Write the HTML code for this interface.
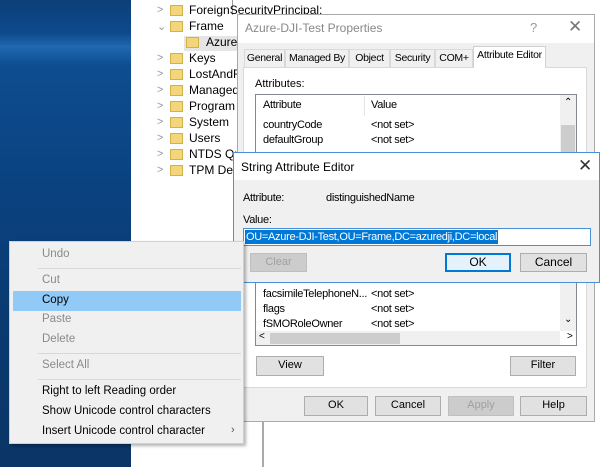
<!DOCTYPE html>
<html><head><style>
*{margin:0;padding:0;box-sizing:border-box}
body{width:614px;height:467px;overflow:hidden;position:relative;font-family:"Liberation Sans",sans-serif;font-size:11px;color:#000;background:#fff}
.a{position:absolute;white-space:nowrap}
.desk{left:0;top:0;width:131px;height:467px;background:linear-gradient(180deg,#0b3f78 0%,#0d4a8c 7%,#2068b0 10%,#0e4d90 14%,#0a4280 40%,#093a70 70%,#0a3566 100%)}
.tree div.t{position:absolute;left:189px;font-size:12px}
.chev{position:absolute;left:157px;color:#999;font-size:11px}
.fold{position:absolute;left:170px;width:13px;height:11px;background:#f3d57a;border:1px solid #d8b04a}
.dlg{background:#f0f0f0;border:1px solid #aaa}
.btn{position:absolute;background:#e1e1e1;border:1px solid #adadad;text-align:center;font-size:11px;line-height:17px}
.dis{color:#a0a0a0;background:#ccc;border-color:#bfbfbf}
.tab{position:absolute;top:49px;height:18px;border:1px solid #d9d9d9;border-bottom:none;background:#f0f0f0;font-size:10.5px;letter-spacing:-0.3px;line-height:17px;text-align:center;white-space:nowrap;overflow:hidden}
.menu div.m{position:absolute;left:41px;font-size:11.5px}
.g{color:#8a8a8a}
.sep{position:absolute;left:37px;width:203px;height:1px;background:#d7d7d7}
.ls{font-size:11px;letter-spacing:-0.3px}
</style></head><body>
<div class="a desk"></div>
<div class="a" style="left:131px;top:0;width:483px;height:467px;background:#fff"></div>
<div class="a" style="left:232px;top:0;width:1px;height:15px;background:#999"></div>
<div class="a" style="left:262px;top:421px;width:2px;height:46px;background:#aaa"></div>
<div class="tree">
<div class="a" style="left:184px;top:36px;width:53px;height:15px;background:#e5e5e5"></div>
<span class="chev" style="top:4px">&gt;</span><div class="fold" style="top:5px"></div><div class="t" style="top:3px">ForeignSecurityPrincipal:</div>
<span class="chev" style="top:20px">&#8964;</span><div class="fold" style="top:21px"></div><div class="t" style="top:19px">Frame</div>
<div class="fold" style="top:37px;left:186px"></div><div class="t" style="top:35px;left:206px">Azure-</div>
<span class="chev" style="top:52px">&gt;</span><div class="fold" style="top:53px"></div><div class="t" style="top:51px">Keys</div>
<span class="chev" style="top:68px">&gt;</span><div class="fold" style="top:69px"></div><div class="t" style="top:67px">LostAndFo</div>
<span class="chev" style="top:84px">&gt;</span><div class="fold" style="top:85px"></div><div class="t" style="top:83px">Managed</div>
<span class="chev" style="top:100px">&gt;</span><div class="fold" style="top:101px"></div><div class="t" style="top:99px">Program D</div>
<span class="chev" style="top:116px">&gt;</span><div class="fold" style="top:117px"></div><div class="t" style="top:115px">System</div>
<span class="chev" style="top:132px">&gt;</span><div class="fold" style="top:133px"></div><div class="t" style="top:131px">Users</div>
<span class="chev" style="top:148px">&gt;</span><div class="fold" style="top:149px"></div><div class="t" style="top:147px">NTDS Qu</div>
<span class="chev" style="top:164px">&gt;</span><div class="fold" style="top:165px"></div><div class="t" style="top:163px">TPM Dev</div>
</div>

<div class="a dlg" style="left:237px;top:14px;width:358px;height:408px">
<div class="a" style="left:0;top:0;width:356px;height:28px;background:#fff"></div>
<div class="a" style="left:7px;top:6px;font-size:12px;color:#888">Azure-DJI-Test Properties</div>
<div class="a" style="left:292px;top:5px;font-size:13px;color:#999">?</div>
<div class="a" style="left:330px;top:2px;font-size:17px;color:#777">&#10005;</div>
</div>
<div class="tab" style="left:244px;width:41px">General</div>
<div class="tab" style="left:285px;width:64px">Managed By</div>
<div class="tab" style="left:349px;width:41px">Object</div>
<div class="tab" style="left:390px;width:45px">Security</div>
<div class="tab" style="left:435px;width:38px">COM+</div>
<div class="tab" style="left:473px;top:46px;height:22px;width:73px;background:#fff;border-color:#d0d0d0">Attribute Editor</div>
<div class="a" style="left:243px;top:67px;width:344px;height:321px;background:#fff;border:1px solid #d9d9d9"></div>
<div class="a" style="left:474px;top:66px;width:71px;height:2px;background:#fff"></div>
<div class="a" style="left:255px;top:78px">Attributes:</div>
<div class="a" style="left:255px;top:94px;width:322px;height:252px;border:1px solid #828790;background:#fff"></div>
<div class="a ls" style="left:263px;top:99px">Attribute</div>
<div class="a" style="left:364px;top:96px;width:1px;height:20px;background:#e5e5e5"></div>
<div class="a ls" style="left:371px;top:99px">Value</div>
<div class="a ls" style="left:263px;top:119px">countryCode</div><div class="a ls" style="left:371px;top:119px">&lt;not set&gt;</div>
<div class="a ls" style="left:263px;top:134px">defaultGroup</div><div class="a ls" style="left:371px;top:134px">&lt;not set&gt;</div>
<div class="a" style="left:560px;top:95px;width:16px;height:236px;background:#f0f0f0"></div>
<div class="a" style="left:561px;top:125px;width:14px;height:30px;background:#cdcdcd"></div>
<div class="a" style="left:564px;top:97px;font-size:10px">&#8963;</div>
<div class="a" style="left:564px;top:314px;font-size:10px">&#8964;</div>
<div class="a ls" style="left:263px;top:288px">facsimileTelephoneN...</div><div class="a ls" style="left:371px;top:288px">&lt;not set&gt;</div>
<div class="a ls" style="left:263px;top:303px">flags</div><div class="a ls" style="left:371px;top:303px">&lt;not set&gt;</div>
<div class="a ls" style="left:263px;top:318px">fSMORoleOwner</div><div class="a ls" style="left:371px;top:318px">&lt;not set&gt;</div>
<div class="a" style="left:256px;top:331px;width:304px;height:14px;background:#f0f0f0"></div>
<div class="a" style="left:270px;top:333px;width:130px;height:11px;background:#cdcdcd"></div>
<div class="a" style="left:259px;top:331px;font-size:10px">&lt;</div>
<div class="a" style="left:567px;top:331px;font-size:10px">&gt;</div>
<div class="btn" style="left:256px;top:356px;width:68px;height:20px">View</div>
<div class="btn" style="left:510px;top:356px;width:66px;height:20px">Filter</div>
<div class="btn" style="left:304px;top:396px;width:64px;height:20px">OK</div>
<div class="btn" style="left:375px;top:396px;width:66px;height:20px">Cancel</div>
<div class="btn dis" style="left:448px;top:396px;width:66px;height:20px">Apply</div>
<div class="btn" style="left:520px;top:396px;width:67px;height:20px">Help</div>

<div class="a" style="left:233px;top:152px;width:367px;height:131px;background:#f0f0f0;border:1px solid #4a90d9">
<div class="a" style="left:0;top:0;width:365px;height:27px;background:#fff"></div>
<div class="a" style="left:7px;top:7px;font-size:12px">String Attribute Editor</div>
<div class="a" style="left:344px;top:3px;font-size:17px;color:#333">&#10005;</div>
<div class="a ls" style="left:9px;top:39px">Attribute:</div>
<div class="a ls" style="left:92px;top:39px">distinguishedName</div>
<div class="a ls" style="left:9px;top:61px">Value:</div>
<div class="a" style="left:9px;top:75px;width:348px;height:18px;background:#fff;border:1px solid #4a90d9"></div>
<div class="a ls" style="left:11px;top:77px;padding:0 1px;background:#0078d7;color:#fff;line-height:14px">OU=Azure-DJI-Test,OU=Frame,DC=azuredji,DC=local</div>
</div>
<div class="btn dis" style="left:250px;top:253px;width:57px;height:19px">Clear</div>
<div class="btn" style="left:445px;top:253px;width:66px;height:19px;border:2px solid #0078d7;background:#e5f1fb;font-size:12px;line-height:15px">OK</div>
<div class="btn" style="left:520px;top:253px;width:67px;height:19px;font-size:12px">Cancel</div>

<div class="a menu" style="left:9px;top:241px;width:235px;height:203px;background:#f0f0f0;border:1px solid #d0d0d0;box-shadow:2px 2px 3px rgba(0,0,0,.3)">
<div class="a" style="left:3px;top:49px;width:228px;height:20px;background:#91c9f7"></div>
<div class="m g" style="top:6px;left:32px">Undo</div>
<div class="sep" style="top:26px;left:28px"></div>
<div class="m g" style="top:32px;left:32px">Cut</div>
<div class="m" style="top:52px;left:32px">Copy</div>
<div class="m g" style="top:71px;left:32px">Paste</div>
<div class="m g" style="top:91px;left:32px">Delete</div>
<div class="sep" style="top:111px;left:28px"></div>
<div class="m g" style="top:117px;left:32px">Select All</div>
<div class="sep" style="top:137px;left:28px"></div>
<div class="m" style="top:143px;left:32px">Right to left Reading order</div>
<div class="m" style="top:163px;left:32px">Show Unicode control characters</div>
<div class="m" style="top:183px;left:32px">Insert Unicode control character</div>
<div class="a" style="left:221px;top:182px;font-size:11px;color:#555">&#8250;</div>
</div>
</body></html>
